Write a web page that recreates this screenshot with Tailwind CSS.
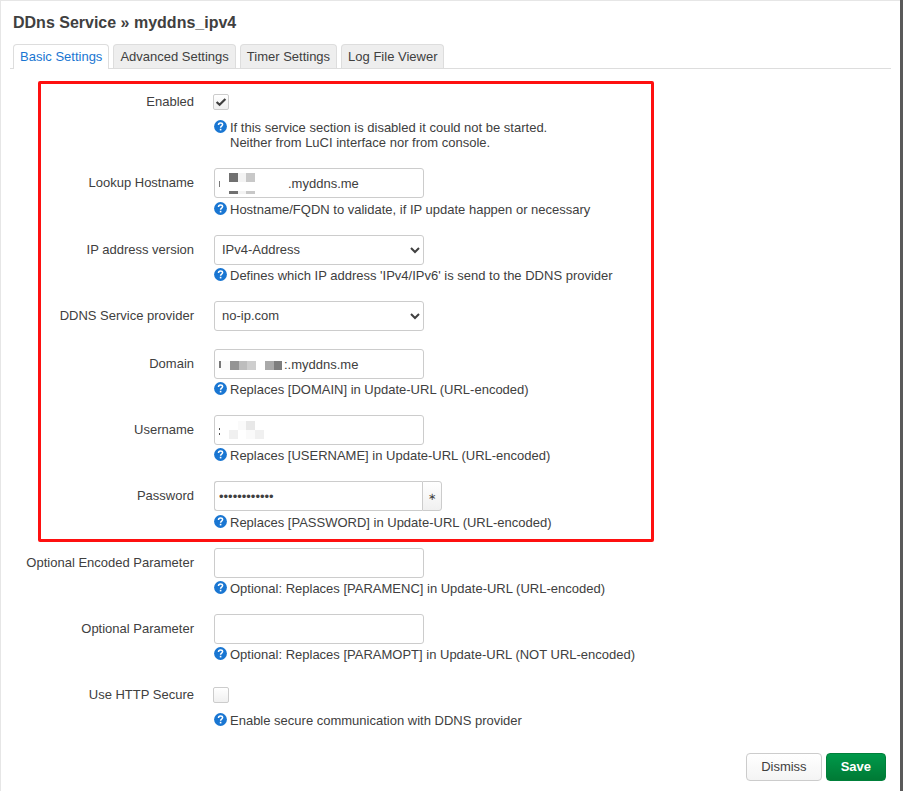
<!DOCTYPE html>
<html lang="en">
<head>
  <meta charset="UTF-8" />
  <meta name="viewport" content="width=device-width, initial-scale=1.0"/>
  <title>DDns Service - LuCI</title>
  <script src="https://cdn.jsdelivr.net/npm/@tailwindcss/browser@4"></script>
</head>
<body class="font-['Liberation_Sans',Arial,sans-serif] text-[13px] leading-[15px] text-[#404040] bg-[#5a5a5a] min-h-screen flex">

  <svg class="hidden">
    <symbol id="help" viewBox="0 0 13 13">
      <circle cx="6.5" cy="6.5" r="6.4" fill="#1976d2"/>
      <path d="M4.5 5C4.5 3.6 5.4 2.9 6.6 2.9C7.8 2.9 8.6 3.6 8.6 4.6C8.6 6.1 6.6 6 6.6 7.7" fill="none" stroke="#fff" stroke-width="1.5"/>
      <rect x="5.8" y="8.8" width="1.6" height="1.6" fill="#fff"/>
    </symbol>
  </svg>

  <!-- Modal -->
  <div class="flex-grow flex flex-col mr-[3px] bg-white border-t border-l border-[#e6e6e6] pl-[9px] pr-[9px] pb-[10px]">
    <h4 class="text-base leading-6 font-bold pl-[3px] mt-[10px]">DDns Service » myddns_ipv4</h4>

    <!-- Tabs -->
    <ul class="flex gap-1 mt-[9px] pl-[3px] leading-6 border-b border-[#ddd]">
      <li class="-mb-px"><a href="#" class="block h-[25px] px-[6px] rounded-t border border-b-0 border-[#ddd] bg-white text-[#1976d2]">Basic Settings</a></li>
      <li><a href="#" class="block h-6 px-[6px] rounded-t border border-b-0 border-[#ddd] bg-[#eee]">Advanced Settings</a></li>
      <li><a href="#" class="block h-6 px-[6px] rounded-t border border-b-0 border-[#ddd] bg-[#eee]">Timer Settings</a></li>
      <li><a href="#" class="block h-6 px-[6px] rounded-t border border-b-0 border-[#ddd] bg-[#eee]">Log File Viewer</a></li>
    </ul>

    <form class="flex flex-col gap-[18px] mt-[18px]">
      <!-- Main options -->
      <div class="relative flex flex-col gap-[18px]">
        <div class="absolute left-[28px] -top-[6px] w-[616px] -bottom-[12px] border-3 border-[#fe1010] rounded-xs pointer-events-none"></div>

        <div class="flex gap-5">
          <label for="enabled" class="w-[184px] shrink-0 text-right pt-[7px]">Enabled</label>
          <div class="flex flex-col">
            <span class="relative flex w-4 h-4 mt-[7px] -ml-px">
              <input id="enabled" type="checkbox" checked class="peer appearance-none w-4 h-4 border border-[#ccc] rounded-xs bg-linear-to-b from-white to-[#f0f0f0]">
              <svg class="absolute inset-0 w-4 h-4 pointer-events-none invisible peer-checked:visible" viewBox="0 0 16 16"><path d="M3.6 8L6.6 10.8L12.4 5" fill="none" stroke="#404040" stroke-width="2.2"/></svg>
            </span>
            <p class="flex gap-[3px] mt-[10px]">
              <svg class="w-[13px] h-[13px]"><use href="#help"/></svg>
              <span>If this service section is disabled it could not be started.<br>Neither from LuCI interface nor from console.</span>
            </p>
          </div>
        </div>

        <div class="flex gap-5">
          <label for="hostname" class="w-[184px] shrink-0 text-right pt-[7px]">Lookup Hostname</label>
          <div class="flex flex-col">
            <span class="relative flex w-[210px]">
              <input id="hostname" type="text" value=".myddns.me" class="w-full h-[30px] border border-[#ccc] rounded-[3px] pl-[73px]">
              <span class="absolute left-[5px] top-[13px] w-px h-[6px] bg-[#777]"></span>
              <span class="absolute left-[15px] top-[5px] flex">
                <i class="w-[9px] h-[9px] bg-[#707070]"></i><i class="w-2 h-[9px] bg-[#f3f3f3]"></i><i class="w-[9px] h-[9px] bg-[#c8c8c8]"></i>
              </span>
              <span class="absolute left-[15px] top-[23px] flex">
                <i class="w-[9px] h-[3px] bg-[#707070]"></i><i class="w-2 h-[3px] bg-[#f3f3f3]"></i><i class="w-[9px] h-[3px] bg-[#c8c8c8]"></i>
              </span>
            </span>
            <p class="flex gap-[3px] mt-1">
              <svg class="w-[13px] h-[13px]"><use href="#help"/></svg>
              <span>Hostname/FQDN to validate, if IP update happen or necessary</span>
            </p>
          </div>
        </div>

        <div class="flex gap-5">
          <label for="ipversion" class="w-[184px] shrink-0 text-right pt-[7px]">IP address version</label>
          <div class="flex flex-col">
            <select id="ipversion" class="w-[210px] h-[30px] border border-[#ccc] rounded-[3px] bg-white px-[3px] pb-px">
              <option>IPv4-Address</option>
              <option>IPv6-Address</option>
            </select>
            <p class="flex gap-[3px] mt-[3px]">
              <svg class="w-[13px] h-[13px]"><use href="#help"/></svg>
              <span>Defines which IP address 'IPv4/IPv6' is send to the DDNS provider</span>
            </p>
          </div>
        </div>

        <div class="flex gap-5">
          <label for="provider" class="w-[184px] shrink-0 text-right pt-[7px]">DDNS Service provider</label>
          <select id="provider" class="w-[210px] h-[30px] border border-[#ccc] rounded-[3px] bg-white px-[3px] pb-px">
            <option>no-ip.com</option>
          </select>
        </div>

        <div class="flex gap-5">
          <label for="domain" class="w-[184px] shrink-0 text-right pt-[7px]">Domain</label>
          <div class="flex flex-col">
            <span class="relative flex w-[210px]">
              <input id="domain" type="text" value=":.myddns.me" class="w-full h-[30px] border border-[#ccc] rounded-[3px] pl-[69px]">
              <span class="absolute left-[5px] top-[12px] w-[2px] h-[7px] bg-[#777]"></span>
              <span class="absolute left-[7px] top-[12px] flex">
                <i class="w-[9px] h-[9px] bg-[#fafafa]"></i><i class="w-[9px] h-[9px] bg-[#949494]"></i><i class="w-2 h-[9px] bg-[#bdbdbd]"></i><i class="w-[9px] h-[9px] bg-[#cecece]"></i><i class="w-[9px] h-[9px]"></i><i class="w-[9px] h-[9px] bg-[#a9a9a9]"></i><i class="w-2 h-[9px] bg-[#7e7e7e]"></i>
              </span>
            </span>
            <p class="flex gap-[3px] mt-[3px]">
              <svg class="w-[13px] h-[13px]"><use href="#help"/></svg>
              <span>Replaces [DOMAIN] in Update-URL (URL-encoded)</span>
            </p>
          </div>
        </div>

        <div class="flex gap-5">
          <label for="username" class="w-[184px] shrink-0 text-right pt-[7px]">Username</label>
          <div class="flex flex-col">
            <span class="relative flex w-[210px]">
              <input id="username" type="text" class="w-full h-[30px] border border-[#ccc] rounded-[3px] px-1">
              <span class="absolute left-[5px] top-[13px] w-px h-[2px] bg-[#555]"></span>
              <span class="absolute left-[5px] top-[18px] w-px h-[2px] bg-[#555]"></span>
              <span class="absolute left-[15px] top-[6px] flex">
                <i class="w-[9px] h-[9px]"></i><i class="w-2 h-[9px] bg-[#fafafa]"></i><i class="w-[9px] h-[9px] bg-[#e8e8e8]"></i>
              </span>
              <span class="absolute left-[15px] top-[15px] flex">
                <i class="w-[9px] h-[9px] bg-[#f0f0f0]"></i><i class="w-2 h-[9px]"></i><i class="w-[9px] h-[9px] bg-[#fafafa]"></i><i class="w-[9px] h-[9px] bg-[#f0f0f0]"></i>
              </span>
            </span>
            <p class="flex gap-[3px] mt-[3px]">
              <svg class="w-[13px] h-[13px]"><use href="#help"/></svg>
              <span>Replaces [USERNAME] in Update-URL (URL-encoded)</span>
            </p>
          </div>
        </div>

        <div class="flex gap-5">
          <label for="password" class="w-[184px] shrink-0 text-right pt-[7px]">Password</label>
          <div class="flex flex-col">
            <div class="flex">
              <input id="password" type="password" value="abcdefghijkl" class="w-[208px] h-[30px] border border-r-0 border-[#ccc] rounded-l-[3px] px-1">
              <button type="button" aria-label="Reveal/hide password" class="w-5 h-[30px] border border-[#ccc] rounded-r-[3px] bg-linear-to-b from-white to-[#f0f0f0] text-[10px]">∗</button>
            </div>
            <p class="flex gap-[3px] mt-1">
              <svg class="w-[13px] h-[13px]"><use href="#help"/></svg>
              <span>Replaces [PASSWORD] in Update-URL (URL-encoded)</span>
            </p>
          </div>
        </div>
      </div>

      <!-- Optional parameters -->
      <div class="flex flex-col gap-[18px]">
        <div class="flex gap-5">
          <label for="paramenc" class="w-[184px] shrink-0 text-right pt-[7px]">Optional Encoded Parameter</label>
          <div class="flex flex-col">
            <input id="paramenc" type="text" class="w-[210px] h-[30px] border border-[#ccc] rounded-[3px] px-1">
            <p class="flex gap-[3px] mt-[3px]">
              <svg class="w-[13px] h-[13px]"><use href="#help"/></svg>
              <span>Optional: Replaces [PARAMENC] in Update-URL (URL-encoded)</span>
            </p>
          </div>
        </div>

        <div class="flex gap-5">
          <label for="paramopt" class="w-[184px] shrink-0 text-right pt-[7px]">Optional Parameter</label>
          <div class="flex flex-col">
            <input id="paramopt" type="text" class="w-[210px] h-[30px] border border-[#ccc] rounded-[3px] px-1">
            <p class="flex gap-[3px] mt-[3px]">
              <svg class="w-[13px] h-[13px]"><use href="#help"/></svg>
              <span>Optional: Replaces [PARAMOPT] in Update-URL (NOT URL-encoded)</span>
            </p>
          </div>
        </div>

        <div class="flex gap-5">
          <label for="https" class="w-[184px] shrink-0 text-right pt-[7px]">Use HTTP Secure</label>
          <div class="flex flex-col">
            <span class="relative flex w-4 h-4 mt-[7px] -ml-px">
              <input id="https" type="checkbox" class="peer appearance-none w-4 h-4 border border-[#ccc] rounded-xs bg-linear-to-b from-white to-[#f0f0f0]">
              <svg class="absolute inset-0 w-4 h-4 pointer-events-none invisible peer-checked:visible" viewBox="0 0 16 16"><path d="M3.6 8L6.6 10.8L12.4 5" fill="none" stroke="#404040" stroke-width="2.2"/></svg>
            </span>
            <p class="flex gap-[3px] mt-[10px]">
              <svg class="w-[13px] h-[13px]"><use href="#help"/></svg>
              <span>Enable secure communication with DDNS provider</span>
            </p>
          </div>
        </div>
      </div>
    </form>

    <!-- Buttons -->
    <div class="flex justify-end gap-1 mt-auto pr-[5px]">
      <button class="h-7 px-[14px] pb-px border border-[#ccc] rounded bg-linear-to-b from-white to-[#f4f4f4]">Dismiss</button>
      <button class="h-7 px-[14px] pb-px border border-[#00803a] rounded bg-linear-to-b from-[#00994a] to-[#007a35] text-white font-bold">Save</button>
    </div>
  </div>

</body>
</html>
